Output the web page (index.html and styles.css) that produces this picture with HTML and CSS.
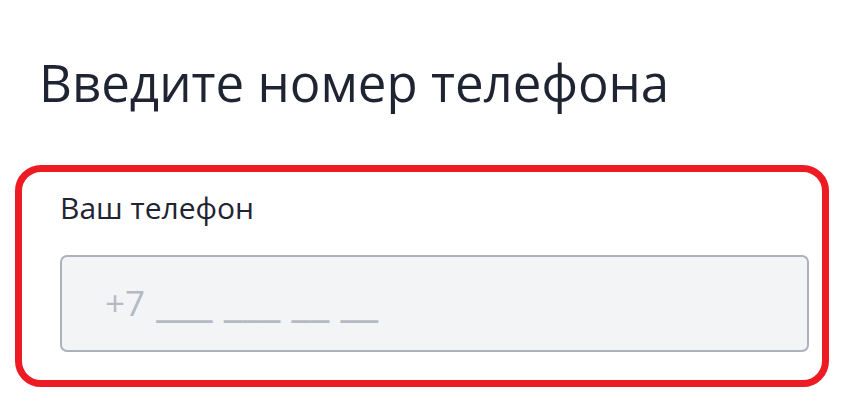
FILE: index.html
```html
<!DOCTYPE html>
<html lang="ru">

<head>
    <meta charset="utf-8">
    <meta name="viewport" content="width=device-width, initial-scale=1.0">
    <title>Телефон</title>
    <link rel="stylesheet" href="styles.css">
</head>

<body>
    <h1 class="titel">Введите номер телефона</h1>

    <section class="felt">
        <label class="felt-label" for="telefon">Ваш телефон</label>
        <div class="felt-input" id="telefon" tabindex="0"><span class="prefiks">+7</span><span class="maske"> ___ ___ __ __</span></div>
    </section>
</body>

</html>
```

FILE: styles.css
```css
body {
    margin: 0;
    padding: 0;
    background: white;
    font-family: "Open Sans", "Noto Sans", sans-serif;
    color: #1f2433;
}

.titel {
    margin: 0 0 52px 0;
    padding: 52px 0 0 39px;
    font-size: 51px;
    font-weight: 400;
    line-height: 1.2;
}

.felt {
    box-sizing: border-box;
    display: flex;
    flex-direction: column;
    width: 814px;
    margin-left: 15px;
    padding: 18px 13px 28px 38px;
    border: 7px solid #ed1c24;
    border-radius: 26px;
}

.felt-label {
    font-size: 30px;
    line-height: 1.2;
    margin-bottom: 29px;
}

.felt-input {
    box-sizing: border-box;
    height: 97px;
    padding: 18px 0 0 43px;
    border: 2px solid #adb1bd;
    border-radius: 7px;
    background: #f3f4f6;
    font-size: 35px;
    line-height: 50px;
    color: #b4b9c5;
    white-space: nowrap;
    outline: none;
}

.maske {
    font-size: 43px;
}
```
